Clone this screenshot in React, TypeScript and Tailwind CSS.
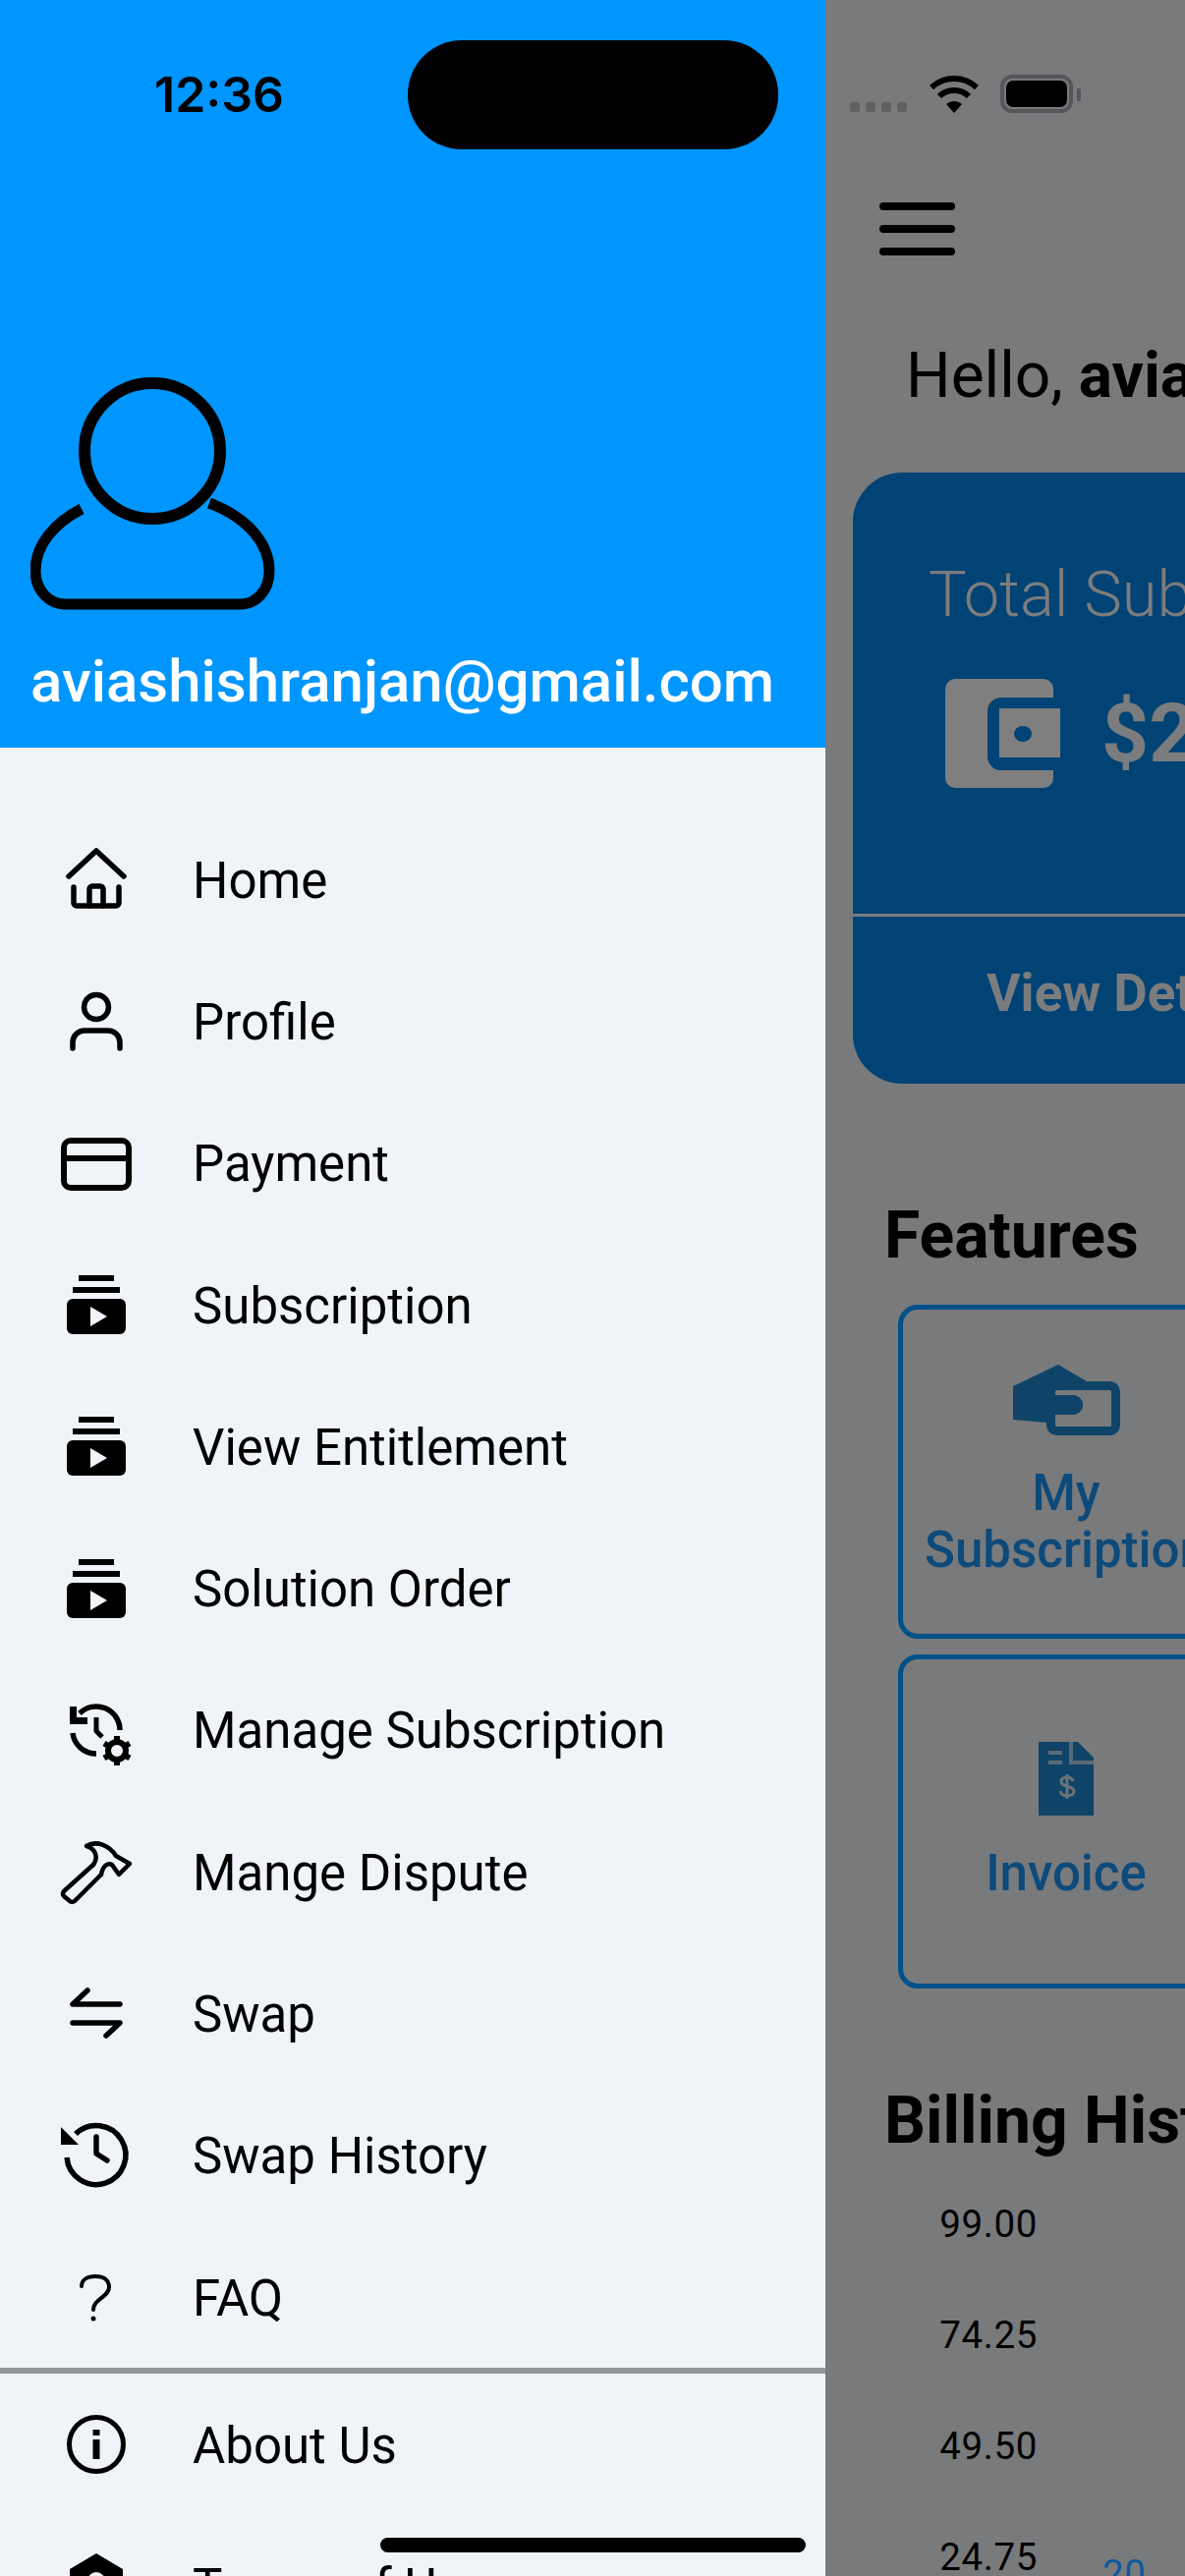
import type { ReactNode } from "react";

const iconClass = "h-[80px] w-[80px] overflow-visible";

function Stroke({ children, width = 5.5 }: { children: ReactNode; width?: number }) {
  return (
    <svg viewBox="0 0 80 80" className={iconClass} fill="none" stroke="#000" strokeWidth={width} strokeLinecap="round" strokeLinejoin="round">
      {children}
    </svg>
  );
}

function HomeIcon() {
  return (
    <Stroke>
      <path d="M12 37 40 11l28 26" />
      <path d="M17 48v16a3 3 0 0 0 3 3h40a3 3 0 0 0 3-3V48" />
      <path d="M33 67V50a3 3 0 0 1 3-3h8a3 3 0 0 1 3 3v17" />
    </Stroke>
  );
}

function ProfileIcon() {
  return (
    <Stroke>
      <circle cx="40" cy="26" r="12.5" />
      <path d="M16 68v-6a12 12 0 0 1 12-12h24a12 12 0 0 1 12 12v6" />
    </Stroke>
  );
}

function PaymentIcon() {
  return (
    <Stroke width={6}>
      <rect x="7" y="17" width="66" height="48" rx="7" />
      <path d="M7 35h66" strokeLinecap="butt" />
    </Stroke>
  );
}

function StackIcon() {
  return (
    <svg viewBox="0 0 80 80" className={iconClass}>
      <rect x="22" y="10" width="36" height="6" />
      <rect x="16" y="22" width="48" height="6" />
      <rect x="10" y="34" width="60" height="36" rx="6" />
      <path d="M34 42 51 52 34 62Z" fill="#f0f4f9" />
    </svg>
  );
}

function ManageIcon() {
  return (
    <Stroke>
      <path d="M64 40A24 24 0 0 0 23 23" strokeLinecap="butt" />
      <path d="M16 43a24 24 0 0 0 24 21" strokeLinecap="butt" />
      <path d="M13 16h7v11h11v7H13Z" fill="#000" stroke="none" />
      <path d="M40 27v14l6 6" strokeWidth="5" strokeLinecap="butt" />
      <circle cx="61" cy="61" r="9" strokeWidth="6" />
      <path d="M61 46v30M48 53.500l26 15M48 68.500l26-15" strokeWidth="6" strokeDasharray="5 20" strokeLinecap="butt" />
    </Stroke>
  );
}

function HammerIcon() {
  return (
    <Stroke width={4.5}>
      <path d="M37 33 7 60q-2 3 0 5l6 5q2 2 5 0l27-27" />
      <path d="M37 33C42 26 40 17 30 14 40 8 53 13 60 24L74 32 63 43 56 33C52 31 47 33 45 43" />
    </Stroke>
  );
}

function SwapIcon() {
  return (
    <Stroke>
      <path d="M31 16 16 30h48" />
      <path d="M16 49h48L50 62" />
    </Stroke>
  );
}

function HistoryIcon() {
  return (
    <Stroke>
      <path d="M19 18A30 30 0 1 1 10 42" strokeLinecap="butt" />
      <path d="M4 11v18h18Z" fill="#000" stroke="none" />
      <path d="M40 21v17l11 7" />
    </Stroke>
  );
}

function FaqIcon() {
  return (
    <Stroke width={4}>
      <path d="M25 29c0-6 5-10 14-10s14 4 14 11c0 10-16 12-16 23" />
      <circle cx="37" cy="62" r="2.500" fill="#000" stroke="none" />
    </Stroke>
  );
}

function AboutIcon() {
  return (
    <svg viewBox="0 0 80 80" className={iconClass}>
      <circle cx="40" cy="40" r="27.500" fill="none" stroke="#000" strokeWidth="5" />
      <rect x="36.500" y="25" width="7" height="6" />
      <rect x="36.500" y="35" width="7" height="20" />
    </svg>
  );
}

function TermsIcon() {
  return (
    <svg viewBox="0 0 80 80" className={iconClass}>
      <path d="M40 6 67 22v38L40 76 13 60V22Z" />
      <circle cx="40" cy="34" r="9" fill="#f0f4f9" />
    </svg>
  );
}

const menu: { label: string; icon: ReactNode }[] = [
  { label: "Home", icon: <HomeIcon /> },
  { label: "Profile", icon: <ProfileIcon /> },
  { label: "Payment", icon: <PaymentIcon /> },
  { label: "Subscription", icon: <StackIcon /> },
  { label: "View Entitlement", icon: <StackIcon /> },
  { label: "Solution Order", icon: <StackIcon /> },
  { label: "Manage Subscription", icon: <ManageIcon /> },
  { label: "Mange Dispute", icon: <HammerIcon /> },
  { label: "Swap", icon: <SwapIcon /> },
  { label: "Swap History", icon: <HistoryIcon /> },
  { label: "FAQ", icon: <FaqIcon /> },
];

function Row({ label, icon }: { label: string; icon: ReactNode }) {
  return (
    <div className="flex h-[144.3px] shrink-0 items-center">
      <div className="flex w-[196px] shrink-0 justify-center">{icon}</div>
      <span className="pt-[2px] text-[51px] leading-none text-black">{label}</span>
    </div>
  );
}

function Drawer() {
  return (
    <div className="flex h-full w-[840px] shrink-0 flex-col bg-[#f0f4f9] font-['Roboto',sans-serif]">
      <div className="flex h-[761px] shrink-0 flex-col justify-end bg-[#0096ff] pb-[32px] pl-[31px]">
        <svg viewBox="0 0 250 240" className="h-[240px] w-[250px]" fill="none" stroke="#000" strokeWidth="12">
          <circle cx="124" cy="75" r="69" />
          <path d="M182 128C222 143 243 170 243 197 243 217 230 231 213 231H36C18 231 5 216 5 197 5 170 25 148 52 134" strokeWidth="11" />
        </svg>
        <div className="mt-[35px] whitespace-nowrap text-[60px] font-medium leading-[70px] text-white">aviashishranjan@gmail.com</div>
      </div>
      <div className="flex flex-col pt-[62px]">
        {menu.map((item) => (
          <Row key={item.label} label={item.label} icon={item.icon} />
        ))}
      </div>
      <div className="h-[6px] shrink-0 bg-[#96979a]" />
      <Row label="About Us" icon={<AboutIcon />} />
      <Row label="Terms of Use" icon={<TermsIcon />} />
    </div>
  );
}

function WalletIcon() {
  return (
    <svg viewBox="0 0 117 111" className="h-[111px] w-[117px] shrink-0">
      <rect width="110" height="111" rx="10" fill="#7f7f7f" />
      <path d="M57 19h53v74H57a14 14 0 0 1-14-14V33a14 14 0 0 1 14-14Z" fill="#004374" />
      <rect x="55" y="30" width="62" height="50" fill="#7f7f7f" />
      <ellipse cx="79" cy="56" rx="9" ry="8" fill="#004374" />
    </svg>
  );
}

function SubscriptionIcon() {
  return (
    <svg viewBox="0 0 109 72" className="h-[72px] w-[109px]">
      <path d="M0 22 46 0l29 17H43v14h18a10 10 0 0 1 0 20H43v8H34l-34-3Z" fill="#0f4468" />
      <rect x="38.500" y="21.500" width="66" height="46" rx="6" fill="none" stroke="#0f4468" strokeWidth="9" />
      <path d="M43 31h18a10 10 0 0 1 0 20H43Z" fill="#0f4468" />
    </svg>
  );
}

function InvoiceIcon() {
  return (
    <svg viewBox="0 0 56 75" className="h-[75px] w-[56px]">
      <rect width="56" height="75" fill="#0f4468" />
      <path d="M40 0h16v16Z" fill="#7a7b7d" />
      <path d="M33 0v21h23M10 11h14M10 21h14" fill="none" stroke="#7a7b7d" strokeWidth="4" opacity="0.7" />
      <path d="M35 40c-1-3-3-4-6-4-4 0-6 2-6 4 0 7 13 4 13 10 0 3-3 5-7 5-3 0-6-2-7-5M29 33v25" fill="none" stroke="#7a7b7d" strokeWidth="3" opacity="0.85" />
    </svg>
  );
}

function FeatureCard({ icon, children }: { icon: ReactNode; children: ReactNode }) {
  return (
    <div className="ml-[74px] flex h-[340px] w-[342px] shrink-0 flex-col items-center justify-center rounded-[20px] border-[5px] border-[#005189] text-center text-[51px] font-medium leading-[58px] text-[#0d4a7a]">
      {icon}
      {children}
    </div>
  );
}

function Background() {
  return (
    <div className="h-full min-w-0 flex-1 overflow-hidden bg-[#797a7c] font-['Roboto',sans-serif]">
      <div className="w-[800px]">
        <div className="ml-[55px] flex w-[77px] flex-col gap-[15px] pt-[206px]">
          <span className="h-[8px] rounded-full bg-black" />
          <span className="h-[8px] rounded-full bg-black" />
          <span className="h-[8px] rounded-full bg-black" />
        </div>
        <div className="ml-[82px] mt-[86px] whitespace-nowrap text-[64px] leading-[74px] text-black">
          Hello, <span className="font-bold">aviashishranjan</span>
        </div>
        <div className="ml-[28px] mt-[61px] h-[622px] w-[566px] rounded-[50px] bg-[#004374] text-[#7b7c7e]">
          <div className="flex h-[449px] flex-col pl-[77px] pt-[86px]">
            <div className="whitespace-nowrap text-[65px] font-light leading-[76px]">Total Subscription</div>
            <div className="ml-[17px] mt-[48px] flex items-center gap-[42px]">
              <WalletIcon />
              <span className="text-[84px] font-bold leading-none">$247.50</span>
            </div>
          </div>
          <div className="h-[3px] bg-[#7b7c7e]" />
          <div className="pt-[46px] text-center text-[53px] font-bold leading-[64px]">View Details</div>
        </div>
        <div className="ml-[60px] mt-[119px] text-[66px] font-bold leading-[72px] text-black">Features</div>
        <div className="mt-[34px] flex flex-col gap-[16px]">
          <FeatureCard
            icon={
              <div className="mb-[30px]">
                <SubscriptionIcon />
              </div>
            }
          >
            <div className="whitespace-nowrap">
              My
              <br />
              Subscription
            </div>
          </FeatureCard>
          <FeatureCard
            icon={
              <div className="mb-[30px]">
                <InvoiceIcon />
              </div>
            }
          >
            Invoice
          </FeatureCard>
        </div>
        <div className="ml-[60px] mt-[99px] whitespace-nowrap text-[66px] font-bold leading-[72px] text-black">Billing History</div>
        <div className="mt-[48px] flex flex-col gap-[71px] pr-[584px] text-right text-[38.5px] leading-[42px] tracking-[0.6px] text-black">
          <div>99.00</div>
          <div>74.25</div>
          <div>49.50</div>
          <div className="flex w-[330px] justify-between">
            <span className="w-[216px] text-right">24.75</span>
            <span className="mt-[17px] w-[48px] text-left text-[#0a5a9c]">20</span>
          </div>
        </div>
      </div>
    </div>
  );
}

function StatusBar() {
  return (
    <>
      <div className="absolute left-[157px] top-[68px] font-['Inter',sans-serif] text-[50px] font-semibold leading-[56px] text-black">12:36</div>
      <div className="absolute left-[415px] top-[41px] h-[111px] w-[377px] rounded-[55px] bg-black" />
      <div className="absolute left-[865px] top-[104px] flex gap-[6px]">
        <span className="h-[10px] w-[10px] rounded-[3px] bg-[#5f6062]" />
        <span className="h-[10px] w-[10px] rounded-[3px] bg-[#5f6062]" />
        <span className="h-[10px] w-[10px] rounded-[3px] bg-[#5f6062]" />
        <span className="h-[10px] w-[10px] rounded-[3px] bg-[#5f6062]" />
      </div>
      <svg viewBox="0 0 50 38" className="absolute left-[946px] top-[77px] h-[38px] w-[50px]" fill="none" stroke="#000" strokeWidth="6">
        <path d="M2 12C15 0 35 0 48 12" />
        <path d="M10 21C18 13 32 13 40 21" />
        <path d="M17 29c5-4 11-4 16 0l-8 9Z" fill="#000" stroke="none" />
      </svg>
      <div className="absolute left-[1018px] top-[76px] flex h-[39px] w-[74px] rounded-[12px] border-[4px] border-[#56575a] p-[2px]">
        <span className="h-full w-full rounded-[7px] bg-black" />
      </div>
      <span className="absolute left-[1096px] top-[90px] h-[13px] w-[4px] rounded-r-[2px] bg-[#56575a]" />
      <div className="absolute left-[387px] top-[2583px] h-[15px] w-[433px] rounded-full bg-black" />
    </>
  );
}

export default function App() {
  return (
    <div className="relative flex h-[2622px] w-[1206px] overflow-hidden">
      <Drawer />
      <Background />
      <StatusBar />
    </div>
  );
}
